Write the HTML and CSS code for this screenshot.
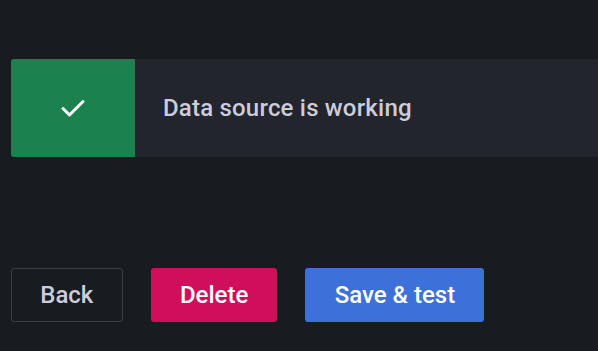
FILE: index.html
```html
<!DOCTYPE html>
<html lang="en">
<head>
  <meta charset="UTF-8" />
  <meta name="viewport" content="width=device-width, initial-scale=1" />
  <title>Data source settings</title>
  <link rel="stylesheet" href="styles.css">
</head>
<body>

  <div class="page">
    <div class="alert">
      <div class="alert-icon">
        <svg width="26" height="20" viewBox="0 0 26 20">
          <path d="M3 10.5 L9.5 17 L23 3.5" fill="none" stroke="#fff" stroke-width="3" stroke-linecap="round" stroke-linejoin="round"/>
        </svg>
      </div>
      <div class="alert-text">Data source is working</div>
    </div>

    <div class="actions">
      <button class="btn btn-secondary">Back</button>
      <button class="btn btn-danger">Delete</button>
      <button class="btn btn-primary">Save &amp; test</button>
    </div>
  </div>

</body>
</html>
```

FILE: styles.css
```css
body {
  margin: 0;
  background: #181b1f;
  font-family: Roboto, "Liberation Sans", sans-serif;
  overflow: hidden;
}
.page {
  padding: 59px 0 0 11px;
}

.alert {
  display: flex;
  height: 98px;
  background: #22252b;
  border-radius: 3px 0 0 3px;
  overflow: hidden;
}
.alert-icon {
  width: 124px;
  flex-shrink: 0;
  background: #1b814f;
  display: flex;
  align-items: center;
  justify-content: center;
}
.alert-text {
  display: flex;
  align-items: center;
  padding-left: 28px;
  color: #ccccdc;
  font-size: 24px;
  font-weight: 500;
  letter-spacing: 0.2px;
}

.actions {
  display: flex;
  gap: 28px;
  margin-top: 111px;
}
.btn {
  height: 54px;
  padding: 0 28.25px;
  border: 1px solid transparent;
  border-radius: 3px;
  font-family: inherit;
  font-size: 24px;
  font-weight: 500;
  color: #fff;
  cursor: pointer;
}
.btn-secondary {
  background: transparent;
  border-color: #3b3e44;
  color: #ccccdc;
}
.btn-danger {
  background: #d10e5c;
}
.btn-primary {
  background: #3d71d9;
}
```
